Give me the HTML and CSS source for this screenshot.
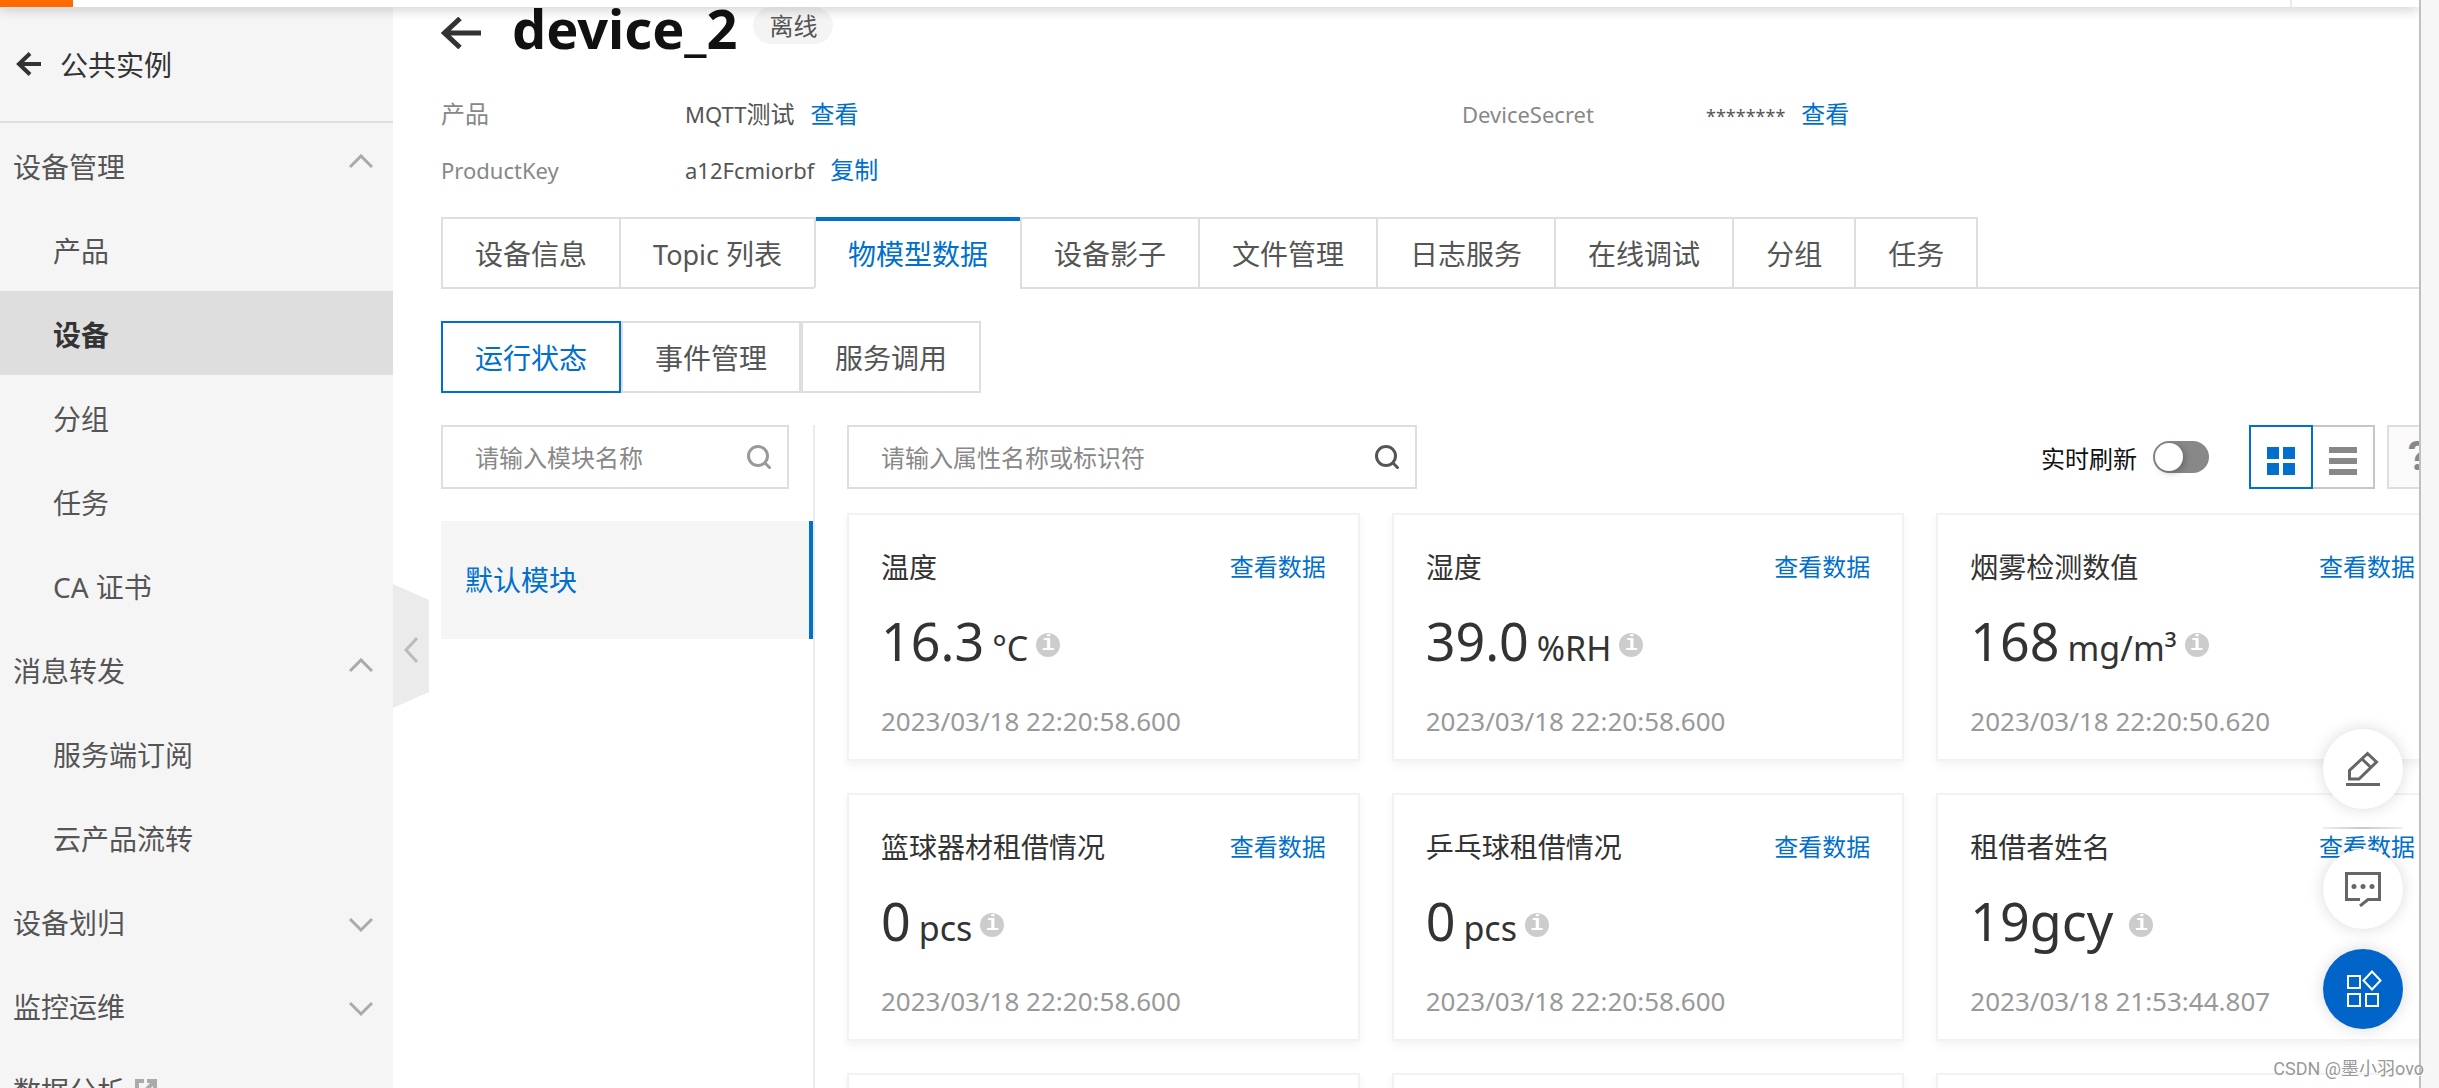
FILE: index.html
```html
<!DOCTYPE html>
<html lang="zh-CN">
<head>
<meta charset="utf-8">
<title>device_2 - 物联网平台</title>
<link rel="stylesheet" href="styles.css">
</head>
<body>
<div class="app">
  <header class="topbar">
    <span class="topbar-brand"></span>
    <span class="topbar-user"></span>
  </header>
  <div class="shell">
    <aside class="sidebar">
      <div class="side-scroll">
        <a class="side-head" href="#">
          <svg width="26" height="24" viewBox="0 0 26 24" fill="none" stroke="#333" stroke-width="4"><path d="M25 12H3M14 1.500L3 12l11 10.500"/></svg>
          公共实例
        </a>
        <nav>
          <button class="side-group">设备管理
            <svg width="24" height="24" viewBox="0 0 24 24" class="chev"><path d="M1 13L12 2l11 11"/></svg></button>
          <a class="side-item" href="#">产品</a>
          <a class="side-item current" href="#">设备</a>
          <a class="side-item" href="#">分组</a>
          <a class="side-item" href="#">任务</a>
          <a class="side-item" href="#">CA 证书</a>
          <button class="side-group">消息转发
            <svg width="24" height="24" viewBox="0 0 24 24" class="chev"><path d="M1 13L12 2l11 11"/></svg></button>
          <a class="side-item" href="#">服务端订阅</a>
          <a class="side-item" href="#">云产品流转</a>
          <button class="side-group">设备划归
            <svg width="24" height="24" viewBox="0 0 24 24" class="chev"><path d="M1 9l11 11L23 9"/></svg></button>
          <button class="side-group">监控运维
            <svg width="24" height="24" viewBox="0 0 24 24" class="chev"><path d="M1 9l11 11L23 9"/></svg></button>
          <a class="side-group side-ext" href="#">数据分析
            <svg width="22" height="22" viewBox="0 0 22 22" fill="none" stroke="#aaa" stroke-width="4"><path d="M9 2H2v18h18v-6M12 2h8v8M19 3L9 13"/></svg></a>
        </nav>
      </div>
      <button class="collapse" aria-label="收起">
        <svg width="14" height="26" viewBox="0 0 14 26" fill="none" stroke="#bbb" stroke-width="3"><path d="M13 1L2 13l11 12"/></svg>
      </button>
    </aside>

    <main class="main">
      <div class="content">
        <div class="title-row">
          <a class="back" href="#" aria-label="返回">
            <svg width="40" height="32" viewBox="0 0 40 32" fill="none" stroke="#333" stroke-width="5"><path d="M40 16H4M19 1.500L3.500 16 19 30.500"/></svg>
          </a>
          <h1>device_2</h1>
          <span class="badge">离线</span>
        </div>

        <dl class="info">
          <div><dt>产品</dt><dd><span class="latin">MQTT</span>测试<a href="#">查看</a></dd></div>
          <div><dt>DeviceSecret</dt><dd><span class="masked">********</span><a href="#">查看</a></dd></div>
          <div><dt>ProductKey</dt><dd><span class="latin">a12Fcmiorbf</span><a href="#">复制</a></dd></div>
        </dl>

        <div class="tabs">
          <button>设备信息</button>
          <button><span class="latin">Topic </span>列表</button>
          <button class="on">物模型数据</button>
          <button>设备影子</button>
          <button>文件管理</button>
          <button>日志服务</button>
          <button>在线调试</button>
          <button>分组</button>
          <button>任务</button>
        </div>

        <div class="subtabs">
          <button class="on">运行状态</button>
          <button>事件管理</button>
          <button>服务调用</button>
        </div>

        <div class="panes">
          <section class="modules">
            <div class="search">
              <input type="text" aria-label="模块名称" placeholder="请输入模块名称">
              <svg width="24" height="24" viewBox="0 0 24 24" fill="none" stroke="#999" stroke-width="3"><circle cx="11" cy="11" r="9.500"/><path d="M17.500 17.500L23.500 23.500"/></svg>
            </div>
            <a class="module" href="#">默认模块</a>
          </section>

          <section class="props">
            <div class="toolbar">
              <div class="search search-wide">
                <input type="text" aria-label="属性名称或标识符" placeholder="请输入属性名称或标识符">
                <svg width="24" height="24" viewBox="0 0 24 24" fill="none" stroke="#555" stroke-width="3"><circle cx="11" cy="11" r="9.500"/><path d="M17.500 17.500L23.500 23.500"/></svg>
              </div>
              <label class="refresh">实时刷新<input type="checkbox" role="switch"></label>
              <div class="views">
                <button class="on" aria-label="卡片视图"><svg width="28" height="28" viewBox="0 0 28 28" fill="#0070cc"><path d="M0 0h12v12H0zM16 0h12v12H16zM0 16h12v12H0zM16 16h12v12H16z"/></svg></button>
                <button aria-label="列表视图"><svg width="28" height="28" viewBox="0 0 28 28" fill="#888"><path d="M0 0h28v6H0zM0 11h28v6H0zM0 22h28v6H0z"/></svg></button>
              </div>
              <button class="help" aria-label="帮助">?</button>
            </div>

            <div class="cards">
              <article class="card">
                <header><h2>温度</h2><a href="#">查看数据</a></header>
                <p class="value"><b>16.3</b><span>°C</span><i class="tip">i</i></p>
                <time>2023/03/18 22:20:58.600</time>
              </article>
              <article class="card">
                <header><h2>湿度</h2><a href="#">查看数据</a></header>
                <p class="value"><b>39.0</b><span>%RH</span><i class="tip">i</i></p>
                <time>2023/03/18 22:20:58.600</time>
              </article>
              <article class="card">
                <header><h2>烟雾检测数值</h2><a href="#">查看数据</a></header>
                <p class="value"><b>168</b><span>mg/m³</span><i class="tip">i</i></p>
                <time>2023/03/18 22:20:50.620</time>
              </article>
              <article class="card">
                <header><h2>篮球器材租借情况</h2><a href="#">查看数据</a></header>
                <p class="value"><b>0</b><span>pcs</span><i class="tip">i</i></p>
                <time>2023/03/18 22:20:58.600</time>
              </article>
              <article class="card">
                <header><h2>乒乓球租借情况</h2><a href="#">查看数据</a></header>
                <p class="value"><b>0</b><span>pcs</span><i class="tip">i</i></p>
                <time>2023/03/18 22:20:58.600</time>
              </article>
              <article class="card">
                <header><h2>租借者姓名</h2><a href="#">查看数据</a></header>
                <p class="value"><b>19gcy</b><span></span><i class="tip">i</i></p>
                <time>2023/03/18 21:53:44.807</time>
              </article>
              <article class="card"></article>
              <article class="card"></article>
              <article class="card"></article>
            </div>
          </section>
        </div>
      </div>
    </main>
  </div>

  <div class="floats">
    <button aria-label="编辑">
      <svg width="36" height="36" viewBox="0 0 36 36" fill="none" stroke="#666" stroke-width="3"><path d="M1 33.500h34M4.500 28v-8.500L22.500 2.500l9 8.500L14 28zM17 8l9 8.500"/></svg>
    </button>
    <hr>
    <button aria-label="反馈">
      <svg width="36" height="36" viewBox="0 0 36 36" fill="none" stroke="#666" stroke-width="3"><path d="M15 28.500H1.500v-26h33v26H23L15 35"/><g fill="#666" stroke="none"><circle cx="9" cy="15.500" r="2.500"/><circle cx="18" cy="15.500" r="2.500"/><circle cx="27" cy="15.500" r="2.500"/></g></svg>
    </button>
    <button class="primary" aria-label="应用">
      <svg width="38" height="38" viewBox="0 0 38 38" fill="none" stroke="#fff" stroke-width="2"><path d="M4 6h12v12H4zM4 24h12v12H4zM22 24h12v12H22zM28 1.500l8.500 9L28 19.500l-8.500-9z"/></svg>
    </button>
  </div>
</div>
<div class="gutter"></div>
<div class="watermark">CSDN @墨小羽ovo</div>
</body>
</html>
```
FILE: styles.css
```css
* { box-sizing: border-box; }

body {
  margin: 0;
  display: flex;
  height: 100vh;
  overflow: hidden;
  font-family: "Noto Sans", "Noto Sans CJK SC", sans-serif;
  font-size: 28px;
  color: #333;
  background: #fff;
}

button, input { font: inherit; color: inherit; }
button { margin: 0; padding: 0; border: 0; background: none; white-space: nowrap; }
a { color: #0070cc; text-decoration: none; }
svg { display: block; flex: none; }

.app { position: relative; flex: 1; min-width: 0; display: flex; flex-direction: column; }
.gutter { flex: none; width: 20px; border-left: 2px solid #c0c0c0; background: #f6f6f6; }

/* top bar */
.topbar {
  position: relative;
  z-index: 2;
  flex: none;
  display: flex;
  justify-content: space-between;
  height: 7px;
  background: #fff;
  box-shadow: 0 2px 12px rgba(0, 0, 0, 0.25);
  clip-path: inset(0 0 -20px 0);
}
.topbar-brand { width: 73px; background: #ff6a00; }
.topbar-user { width: 129px; border-left: 2px solid #ebebeb; }

.shell { flex: 1; min-height: 0; display: flex; }

/* sidebar */
.sidebar { position: relative; z-index: 1; flex: none; width: 393px; background: #f5f5f5; }
.side-scroll { height: 100%; overflow: hidden; }
.side-head {
  display: flex;
  align-items: center;
  gap: 18px;
  height: 116px;
  padding-left: 16px;
  border-bottom: 2px solid #dedede;
  color: #333;
}
.side-group, .side-item {
  display: flex;
  align-items: center;
  width: 100%;
  height: 84px;
  padding-top: 2px;
  color: #555;
}
.side-group { justify-content: space-between; padding-left: 13px; padding-right: 20px; }
.side-item { padding-left: 53px; }
.side-item.current { background: #dedede; color: #333; font-weight: 700; }
.side-ext { justify-content: flex-start; gap: 10px; }
.chev { fill: none; stroke: #aaa; stroke-width: 3; }
.collapse {
  position: absolute;
  left: 100%;
  top: 577px;
  width: 36px;
  height: 124px;
  display: flex;
  align-items: center;
  padding: 8px 0 0 11px;
  background: #ebebeb;
  clip-path: polygon(0 0, 100% 16px, 100% 108px, 0 100%);
}

/* page content: wider than the visible pane */
.main { flex: 1; min-width: 0; overflow: hidden; padding-left: 48px; }
.content { margin-right: -30px; }

.title-row { display: flex; align-items: flex-end; height: 42px; margin-bottom: 37px; }
.title-row h1 { margin: 0 16px 0 31px; font-size: 54px; line-height: 42px; color: #111; }
.badge {
  align-self: flex-start;
  padding: 0 16px;
  border-radius: 20px;
  background: #f4f4f4;
  color: #555;
  font-size: 24px;
  line-height: 37px;
}

.info {
  display: grid;
  grid-template-columns: 1fr 1fr;
  column-gap: 34px;
  margin: 0 0 19px;
  font-size: 24px;
  line-height: 56px;
}
.info div { display: flex; height: 56px; }
.info dt { width: 244px; color: #888; }
.info div:nth-child(n + 2) dt { font-size: 22px; }
.info dd { margin: 0; color: #555; }
.info a { margin-left: 16px; }
.info .latin { font-size: 22px; }
.info .masked { font-size: 18px; }

.tabs { display: flex; height: 72px; border-bottom: 2px solid #dedede; margin-bottom: 32px; }
.tabs button {
  position: relative;
  height: 72px;
  padding: 0 32px;
  margin-left: -2px;
  border: 2px solid #dedede;
  color: #555;
}
.tabs button:first-child { margin-left: 0; }
.tabs .latin { font-size: 27px; white-space: pre; }
.tabs .on { color: #0070cc; border-bottom-color: #fff; }
.tabs .on::before {
  content: "";
  position: absolute;
  inset: -2px 0 auto;
  height: 4px;
  background: #0070cc;
}

.subtabs { display: flex; margin-bottom: 32px; }
.subtabs button { height: 72px; padding: 0 32px; border: 2px solid #dedede; color: #555; }
.subtabs .on { border-color: #0070cc; color: #0070cc; }

.panes { display: flex; }
.modules { flex: none; width: 374px; min-height: 700px; border-right: 2px solid #ebebeb; }
.search {
  display: flex;
  align-items: center;
  height: 64px;
  margin-right: 24px;
  padding: 0 16px 0 32px;
  border: 2px solid #dedede;
}
.search input { flex: 1; min-width: 0; padding: 0; border: 0; outline: 0; background: none; font-size: 24px; }
.search input::placeholder { color: #888; opacity: 1; }
.search-wide { width: 570px; margin-right: auto; }
.module {
  display: block;
  margin-top: 32px;
  padding-left: 24px;
  border-right: 4px solid #0070cc;
  background: #f5f5f5;
  line-height: 118px;
}

.props { flex: 1; min-width: 0; padding-left: 32px; }
.toolbar { display: flex; align-items: center; margin-bottom: 24px; }
.refresh { display: flex; align-items: center; gap: 16px; margin-right: 40px; font-size: 24px; color: #111; }
.refresh input {
  appearance: none;
  width: 56px;
  height: 32px;
  margin: 0;
  padding: 2px;
  border-radius: 16px;
  background: #888;
}
.refresh input::before {
  content: "";
  display: block;
  width: 28px;
  height: 28px;
  border-radius: 50%;
  background: #fff;
  box-shadow: 2px 2px 6px rgba(0, 0, 0, 0.25);
}
.views { display: flex; margin-right: 12px; }
.views button {
  display: flex;
  align-items: center;
  justify-content: center;
  width: 62px;
  height: 64px;
  padding-top: 8px;
  border: 2px solid #c6c6c6;
  border-left: 0;
}
.views .on { width: 64px; border: 2px solid #0070cc; }
.help {
  width: 62px;
  height: 64px;
  border: 2px solid #dedede;
  background: #fafafa;
  color: #888;
  font-family: Roboto, sans-serif;
  font-size: 40px;
  font-weight: 700;
  line-height: 60px;
}

.cards { display: grid; grid-template-columns: repeat(3, 1fr); gap: 32px; }
.card {
  min-height: 248px;
  padding: 32px 32px 22px;
  border: 2px solid #f2f2f2;
  background: #fff;
  box-shadow: 0 4px 8px rgba(0, 0, 0, 0.05);
}
.card header { display: flex; justify-content: space-between; line-height: 40px; margin-bottom: 18px; }
.card h2 { margin: 0; font-size: 28px; font-weight: 400; }
.card header a { font-size: 24px; }
.value {
  display: flex;
  align-items: baseline;
  gap: 8px;
  height: 72px;
  margin: 0 0 28px;
  font-size: 34px;
  line-height: 72px;
}
.value b { font-size: 52px; font-weight: 400; }
.tip {
  align-self: center;
  width: 24px;
  height: 24px;
  margin-top: 8px;
  border-radius: 50%;
  background: #ccc;
  color: #fff;
  font: 700 22px/23px "Liberation Mono", monospace;
  text-align: center;
}
.card time { display: block; font-size: 26px; line-height: 32px; color: #999; }

/* floating actions */
.floats {
  position: absolute;
  z-index: 3;
  right: 16px;
  bottom: 59px;
  width: 80px;
  display: flex;
  flex-direction: column;
  gap: 20px;
}
.floats button {
  display: flex;
  align-items: center;
  justify-content: center;
  width: 80px;
  height: 80px;
  border-radius: 50%;
  background: #fff;
  box-shadow: 0 0 16px rgba(0, 0, 0, 0.15);
}
.floats .primary { background: #0064c8; }
.floats hr {
  width: 100%;
  height: 2px;
  margin: -2px 0 0;
  border: 0;
  background: linear-gradient(90deg, #eee, #c4c9d0, #eee);
}

.watermark {
  position: absolute;
  z-index: 4;
  right: 15px;
  bottom: 6px;
  font-family: Roboto, "Noto Sans CJK SC", sans-serif;
  font-size: 18px;
  line-height: 26px;
  color: #999;
  text-shadow: 1px 1px 0 #fff;
}
```
